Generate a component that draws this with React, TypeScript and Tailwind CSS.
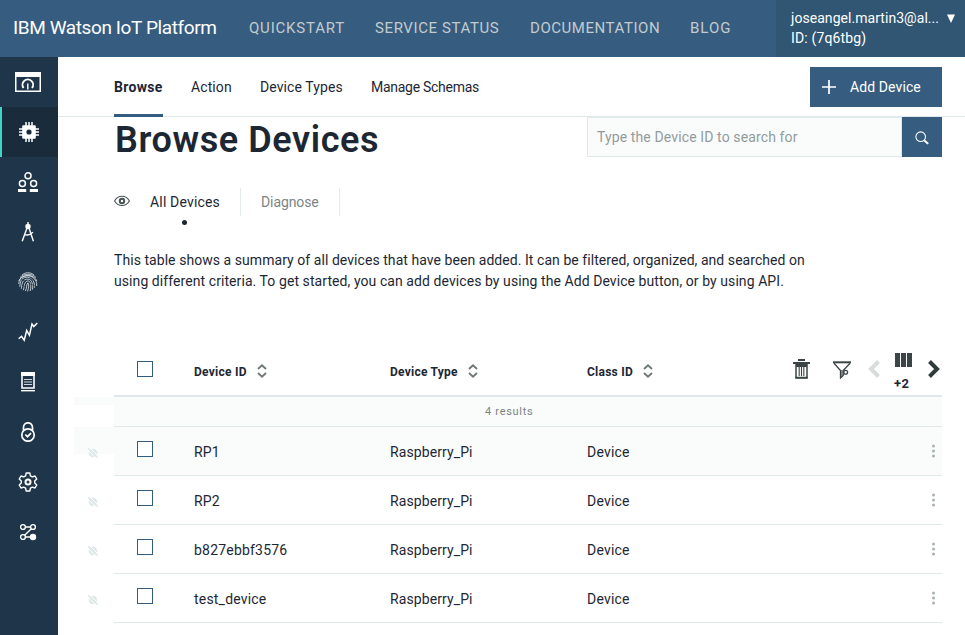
import type { ReactNode } from "react";

const devices = ["RP1", "RP2", "b827ebbf3576", "test_device"];

function DashboardIcon() {
  return (
    <svg width="26" height="20" viewBox="0 0 26 20" fill="none" stroke="#fff">
      <rect x="0.75" y="0.75" width="24.5" height="18.5" strokeWidth="1.5" />
      <path d="M0 0h26v5H0z" fill="#fff" stroke="none" />
      <path d="M8.600 16A5.300 5.300 0 1 1 17 16" strokeWidth="1.900" />
      <path d="M12.800 17.500v-6" strokeWidth="1.400" />
    </svg>
  );
}

function ChipIcon() {
  return (
    <svg width="20" height="20" viewBox="0 0 20 20" fill="none" stroke="#fff">
      <path d="M7 0v20M10 0v20M13 0v20M0 7h20M0 10h20M0 13h20" strokeWidth="1.5" />
      <rect x="3.2" y="3.2" width="13.6" height="13.6" rx="1" fill="#fff" stroke="none" />
      <circle cx="10" cy="10" r="2.6" fill="#1a2c3c" stroke="none" />
    </svg>
  );
}

function MembersIcon() {
  return (
    <svg width="20" height="20" viewBox="0 0 20 20" fill="none" stroke="#fff" strokeWidth="1.5">
      <circle cx="10" cy="3.8" r="3" />
      <circle cx="4.4" cy="11.6" r="3" />
      <circle cx="15.6" cy="11.6" r="3" />
      <path d="M0 17h8.2v3H0zM11.8 17H20v3h-8.2z" fill="#fff" stroke="none" />
    </svg>
  );
}

function CompassIcon() {
  return (
    <svg width="14" height="20" viewBox="0 0 14 20" fill="none" stroke="#fff" strokeWidth="1.4">
      <path d="M7 0v3M6 6 1.2 19.3M8 6l4.4 13.3M3 12.300c3 1.200 6.500.6 9-2.200" />
      <circle cx="7" cy="4.5" r="2" fill="#fff" />
    </svg>
  );
}

function FingerprintIcon() {
  return (
    <svg width="20" height="20" viewBox="0 0 20 20" fill="none" stroke="#e4eaee" strokeWidth="0.8">
      <path d="M4 3c3.500-3 8.500-3 12 0M2 5.500C6 1.200 14 1.200 18 5.500M.8 9C3 2.500 15.500 1 18.800 9M.7 12C1 4 10 1.500 15 5.500c3 2.300 4 5 3.700 8.500M1.800 14.800C2.200 10 3 6 8 5.200c5-.7 9 3.500 8.500 10.500M3.300 16.800C4 12.500 3.700 8.500 8.500 7.200c4-1 7 3 6 10.500M5.200 18.200c1.500-3.500.5-8 4.200-9.200 3.200-.7 4.200 4 2.800 10M7.400 19c1.700-3.500.9-7 2.500-8.200 1.300 1 .8 5.200-.3 8.600" />
      <path d="m3 7 4 2M12 12l5 2M4 13l4 2M12 5l3 4" stroke="#1f364a" strokeWidth="0.7" />
    </svg>
  );
}

function TrendIcon() {
  return (
    <svg width="20" height="20" viewBox="0 0 20 20" fill="none" stroke="#fff" strokeWidth="1.5">
      <path d="M.7 16.700 3.500 14.300l2.700 3.900L8.700 8.500l2.700 4.800L14 2l1.800 2.500L19.300 1" />
    </svg>
  );
}

function DocumentIcon() {
  return (
    <svg width="14" height="20" viewBox="0 0 14 20" fill="none" stroke="#fff">
      <path d="M1 1h12v15H1z" strokeWidth="1.6" />
      <path d="M0 0h14v4H0z" fill="#fff" stroke="none" />
      <path d="M3 7.500h8M3 10h8M3 12.500h8" strokeWidth="1" strokeOpacity="0.8" />
      <path d="M0 18.700h14" strokeWidth="1.4" />
    </svg>
  );
}

function LockIcon() {
  return (
    <svg width="16" height="20" viewBox="0 0 16 20" fill="none" stroke="#fff" strokeWidth="1.700">
      <circle cx="8" cy="13" r="6.200" />
      <path d="M3.500 8.500V5.300a4.500 4.500 0 0 1 9 0v3.200M5.300 12.500l2.200 2.200 3.500-3.500" />
    </svg>
  );
}

function GearIcon() {
  return (
    <svg width="20" height="20" viewBox="0 0 20 20" fill="none" stroke="#fff">
      <path d="M8.200 1h3.600l.6 2.800 1.900 1.100 2.700-.9 1.800 3.100L16.700 9v2l2.100 1.900L17 16l-2.700-.9-1.900 1.100-.6 2.800H8.200l-.6-2.800-1.900-1.100L3 16l-1.800-3.100L3.300 11V9L1.200 7.100 3 4l2.700.9 1.900-1.100z" strokeWidth="1.400" strokeLinejoin="round" />
      <circle cx="10" cy="10" r="2.500" strokeWidth="2" />
    </svg>
  );
}

function FlowIcon() {
  return (
    <svg width="18" height="18" viewBox="0 0 18 18" fill="none" stroke="#fff" strokeWidth="1.400">
      <circle cx="4" cy="4" r="2.400" />
      <circle cx="14" cy="4" r="2.400" />
      <circle cx="4" cy="14" r="2.400" />
      <circle cx="14" cy="14" r="2.500" fill="#fff" />
      <path d="M6.400 4h5.200M6.400 14h5.200M12.300 5.700l-6.600 6.600" />
    </svg>
  );
}

function SortIcon() {
  return (
    <svg width="10" height="14" viewBox="0 0 10 14" fill="none" stroke="#6f7878" strokeWidth="1.900" className="mb-[3px]">
      <path d="M1 5 5 1.300 9 5M1 9l4 3.700L9 9" />
    </svg>
  );
}

function TrashIcon() {
  return (
    <svg width="17" height="20" viewBox="0 0 17 20" fill="none" stroke="#3b4545">
      <path d="M5 1h7M0 4h17" strokeWidth="2" />
      <path d="M3 4.500h11V19H3z" strokeWidth="1.500" />
      <path d="M3 4h11v4H3z" fill="#3b4545" stroke="none" />
      <path d="M6.200 7v10M8.500 7v10M10.800 7v10" strokeWidth="1.100" />
      <path d="M2.300 18.500h12.400" strokeWidth="1.500" />
    </svg>
  );
}

function FilterIcon() {
  return (
    <svg width="18" height="18" viewBox="0 0 18 18" fill="none" stroke="#3b4545" strokeWidth="1.300">
      <path d="M0 1.300h18" strokeWidth="2" />
      <path d="m1 2.300 6.500 7.200V17l2.700-2.500V9.500L17 2.300" />
      <path d="M8.800 9v6.500" strokeWidth="1.800" strokeOpacity="0.6" />
      <circle cx="12.700" cy="11.200" r="1.900" />
    </svg>
  );
}

function DisconnectedIcon() {
  return (
    <svg width="10" height="10" viewBox="0 0 10 10" fill="none" className="mt-[3px]">
      <circle cx="5" cy="5" r="4.300" fill="#dfe8e8" />
      <path d="m0 2.200 8 8M2 0l8 8" stroke="#fcfdfd" strokeWidth="1" />
      <path d="m0 .2 9.800 9.600" stroke="#dfe8e8" strokeWidth="1.300" />
    </svg>
  );
}

function Checkbox() {
  return <span className="block size-4 border border-[#325c80] bg-white" />;
}

const navIcons: ReactNode[] = [
  <DashboardIcon />,
  <ChipIcon />,
  <MembersIcon />,
  <CompassIcon />,
  <FingerprintIcon />,
  <TrendIcon />,
  <DocumentIcon />,
  <LockIcon />,
  <GearIcon />,
  <FlowIcon />,
];

function ColumnHeading({ children }: { children: ReactNode }) {
  return (
    <div className="flex items-center gap-[10px] pt-px text-[12px] leading-5 font-bold tracking-[0.25px]">
      {children}
      <SortIcon />
    </div>
  );
}

function Header() {
  return (
    <header className="flex h-[57px] shrink-0 bg-[#365d80] whitespace-nowrap text-white">
      <h1 className="w-[249px] pl-[13px] text-[19px] leading-[56px] tracking-[-0.4px]">IBM Watson IoT Platform</h1>
      <nav className="flex flex-1 text-[15px] leading-[56px] text-[#c3cbcf]">
        <a className="w-[126px] tracking-[0.8px]">QUICKSTART</a>
        <a className="w-[155px] tracking-[0.6px]">SERVICE STATUS</a>
        <a className="w-[160px] tracking-[0.55px]">DOCUMENTATION</a>
        <a className="tracking-[1px]">BLOG</a>
      </nav>
      <div className="flex w-[189px] bg-[#305673] pt-2 pl-[15px] text-[14px] leading-5">
        <div className="w-[155px]">
          <p className="tracking-[0.05px]">joseangel.martin3@al...</p>
          <p className="tracking-[0.15px]">ID: (7q6tbg)</p>
        </div>
        <svg width="10" height="10" viewBox="0 0 10 10" className="mt-[6px]">
          <path d="M1 0.500h8L5 9z" fill="#fff" />
        </svg>
      </div>
    </header>
  );
}

function Sidebar() {
  return (
    <aside className="w-[58px] shrink-0 bg-[#1f364a]">
      {navIcons.map((icon, i) => (
        <div
          key={i}
          className={
            i === 1
              ? "flex h-[50px] items-center justify-center border-l-2 border-[#41d6c3] bg-[#1a2c3c] pr-[2px]"
              : "flex h-[50px] items-center justify-center pr-[2px]"
          }
        >
          {icon}
        </div>
      ))}
    </aside>
  );
}

export default function App() {
  return (
    <div className="flex h-[635px] w-[965px] flex-col overflow-hidden bg-white font-['Roboto','Liberation_Sans',sans-serif] text-[#1d2733]">
      <Header />
      <div className="flex min-h-0 flex-1">
        <Sidebar />
        <main className="flex min-w-0 flex-1 flex-col">
          <div className="flex h-[60px] shrink-0 items-start justify-between border-b border-[#dfe9e9] pr-[23px] pl-14 text-[14px] leading-[60px] whitespace-nowrap">
            <div className="flex">
              <a className="mr-7 h-[60px] w-[49px] border-b-[3px] border-[#325c80] font-bold tracking-[0.3px]">Browse</a>
              <a className="w-[69px] tracking-[0.1px]">Action</a>
              <a className="w-[111px] tracking-[0.1px]">Device Types</a>
              <a className="tracking-[-0.28px]">Manage Schemas</a>
            </div>
            <button className="mt-[10px] flex h-10 w-[132px] items-center bg-[#365d80] pl-3 tracking-[0.1px] text-white">
              <svg width="14" height="14" viewBox="0 0 14 14" stroke="#fff" strokeWidth="1.700" className="mr-[14px]">
                <path d="M7 0v14M0 7h14" />
              </svg>
              Add Device
            </button>
          </div>

          <div className="flex h-[71px] shrink-0 justify-between pr-[23px] pl-14">
            <h2 className="pl-px text-[36px] leading-[46px] font-semibold tracking-[0.6px] whitespace-nowrap">Browse Devices</h2>
            <div className="flex h-10 w-[355px]">
              <div className="flex-1 border border-[#dfe9e9] bg-[#fafcfb] pl-[9px] text-[14px] leading-[38px] tracking-[0.12px] text-[#929b9b]">
                Type the Device ID to search for
              </div>
              <div className="flex w-10 items-center justify-center bg-[#365d80]">
                <svg width="14" height="14" viewBox="0 0 16 16" fill="none" stroke="#fff" className="mt-px">
                  <circle cx="6.500" cy="6.500" r="5.500" strokeWidth="1.200" />
                  <path d="m10.500 10.500 4.500 4.200" strokeWidth="2.300" />
                </svg>
              </div>
            </div>
          </div>

          <div className="flex h-[62px] shrink-0 pl-14 text-[14px] leading-7">
            <svg width="16" height="12" viewBox="0 0 16 12" fill="none" stroke="#485353" className="mt-[7px] mr-5">
              <path d="M.6 6C4-.3 12-.3 15.400 6 12 12 4 12 .6 6z" strokeWidth="1.100" />
              <circle cx="8" cy="6" r="2.200" strokeWidth="2" />
            </svg>
            <div className="flex h-7 w-[91px] flex-col border-r border-[#e5eaea] tracking-[0.17px] whitespace-nowrap">
              All Devices
              <span className="mt-1 ml-8 block size-[5px] shrink-0 rounded-full bg-[#1d2733]" />
            </div>
            <div className="h-7 w-[99px] border-r border-[#e5eaea] pl-5 tracking-[-0.1px] text-[#7c8585]">Diagnose</div>
          </div>

          <p className="h-[95px] shrink-0 pl-14 text-[14px] leading-[21px] whitespace-nowrap">
            <span className="block tracking-[0.055px]">This table shows a summary of all devices that have been added. It can be filtered, organized, and searched on</span>
            <span className="block tracking-[0.075px]">using different criteria. To get started, you can add devices by using the Add Device button, or by using API.</span>
          </p>

          <div className="mr-[23px] ml-14 flex h-[52px] shrink-0 border-b-2 border-[#dfe9e9]">
            <div className="w-20 pt-4 pl-[23px]"><Checkbox /></div>
            <div className="w-[196px] pt-4"><ColumnHeading>Device ID</ColumnHeading></div>
            <div className="w-[197px] pt-4"><ColumnHeading>Device Type</ColumnHeading></div>
            <div className="w-[206px] pt-4"><ColumnHeading>Class ID</ColumnHeading></div>
            <div className="flex flex-1 pt-[14px]">
              <TrashIcon />
              <span className="ml-[23px] pt-[2px]"><FilterIcon /></span>
              <svg width="12" height="18" viewBox="0 0 12 18" fill="none" stroke="#d8dcdc" strokeWidth="4" className="mt-px ml-[17px]">
                <path d="M10.500 1.500 3 9l7.500 7.500" />
              </svg>
              <div className="-mt-[6px] ml-[15px] w-[17px]">
                <svg width="17" height="14" viewBox="0 0 17 14" fill="#3b4545">
                  <path d="M0 0h5v14H0zM6 0h5v14H6zM12 0h5v14h-5z" />
                </svg>
                <p className="mt-[7px] -ml-px text-[13px] leading-5 font-bold tracking-[0.5px]">+2</p>
              </div>
              <svg width="12" height="18" viewBox="0 0 12 18" fill="none" stroke="#303b3b" strokeWidth="4" className="mt-px ml-4">
                <path d="M1.500 1.500 9 9l-7.500 7.500" />
              </svg>
            </div>
          </div>

          <div className="mr-[23px] ml-4 flex h-[30px] shrink-0">
            <div className="h-2 w-10 bg-[#fafcfb]" />
            <div className="flex-1 border-b border-[#dfe9e9] bg-[#fafcfb] pl-[371px] text-[11px] leading-[30px] tracking-[0.7px] text-[#7c8585]">4 results</div>
          </div>

          {devices.map((id, i) => (
            <div key={id} className="mr-[23px] ml-4 flex h-[49px] shrink-0 text-[14px] leading-[50px]">
              <div className={i === 0 ? "flex h-[27px] w-10 justify-center bg-[#fafcfb] pt-[18px] pr-[2px]" : "flex h-[27px] w-10 justify-center pt-[18px] pr-[2px]"}>
                <DisconnectedIcon />
              </div>
              <div className={i === 0 ? "flex flex-1 border-b border-[#dfe9e9] bg-[#fafcfb]" : "flex flex-1 border-b border-[#dfe9e9]"}>
                <div className="w-20 pt-[14px] pl-[23px]"><Checkbox /></div>
                <div className="w-[196px] tracking-[0.2px]">{id}</div>
                <div className="w-[197px] tracking-[0.1px]">Raspberry_Pi</div>
                <div className="flex-1 tracking-[0.2px]">Device</div>
                <svg width="3" height="14" viewBox="0 0 3 14" fill="#a9b2b2" className="mt-[17px] mr-[7px]">
                  <circle cx="1.500" cy="2" r="1.500" />
                  <circle cx="1.500" cy="7" r="1.500" />
                  <circle cx="1.500" cy="12" r="1.500" />
                </svg>
              </div>
            </div>
          ))}
        </main>
      </div>
    </div>
  );
}
